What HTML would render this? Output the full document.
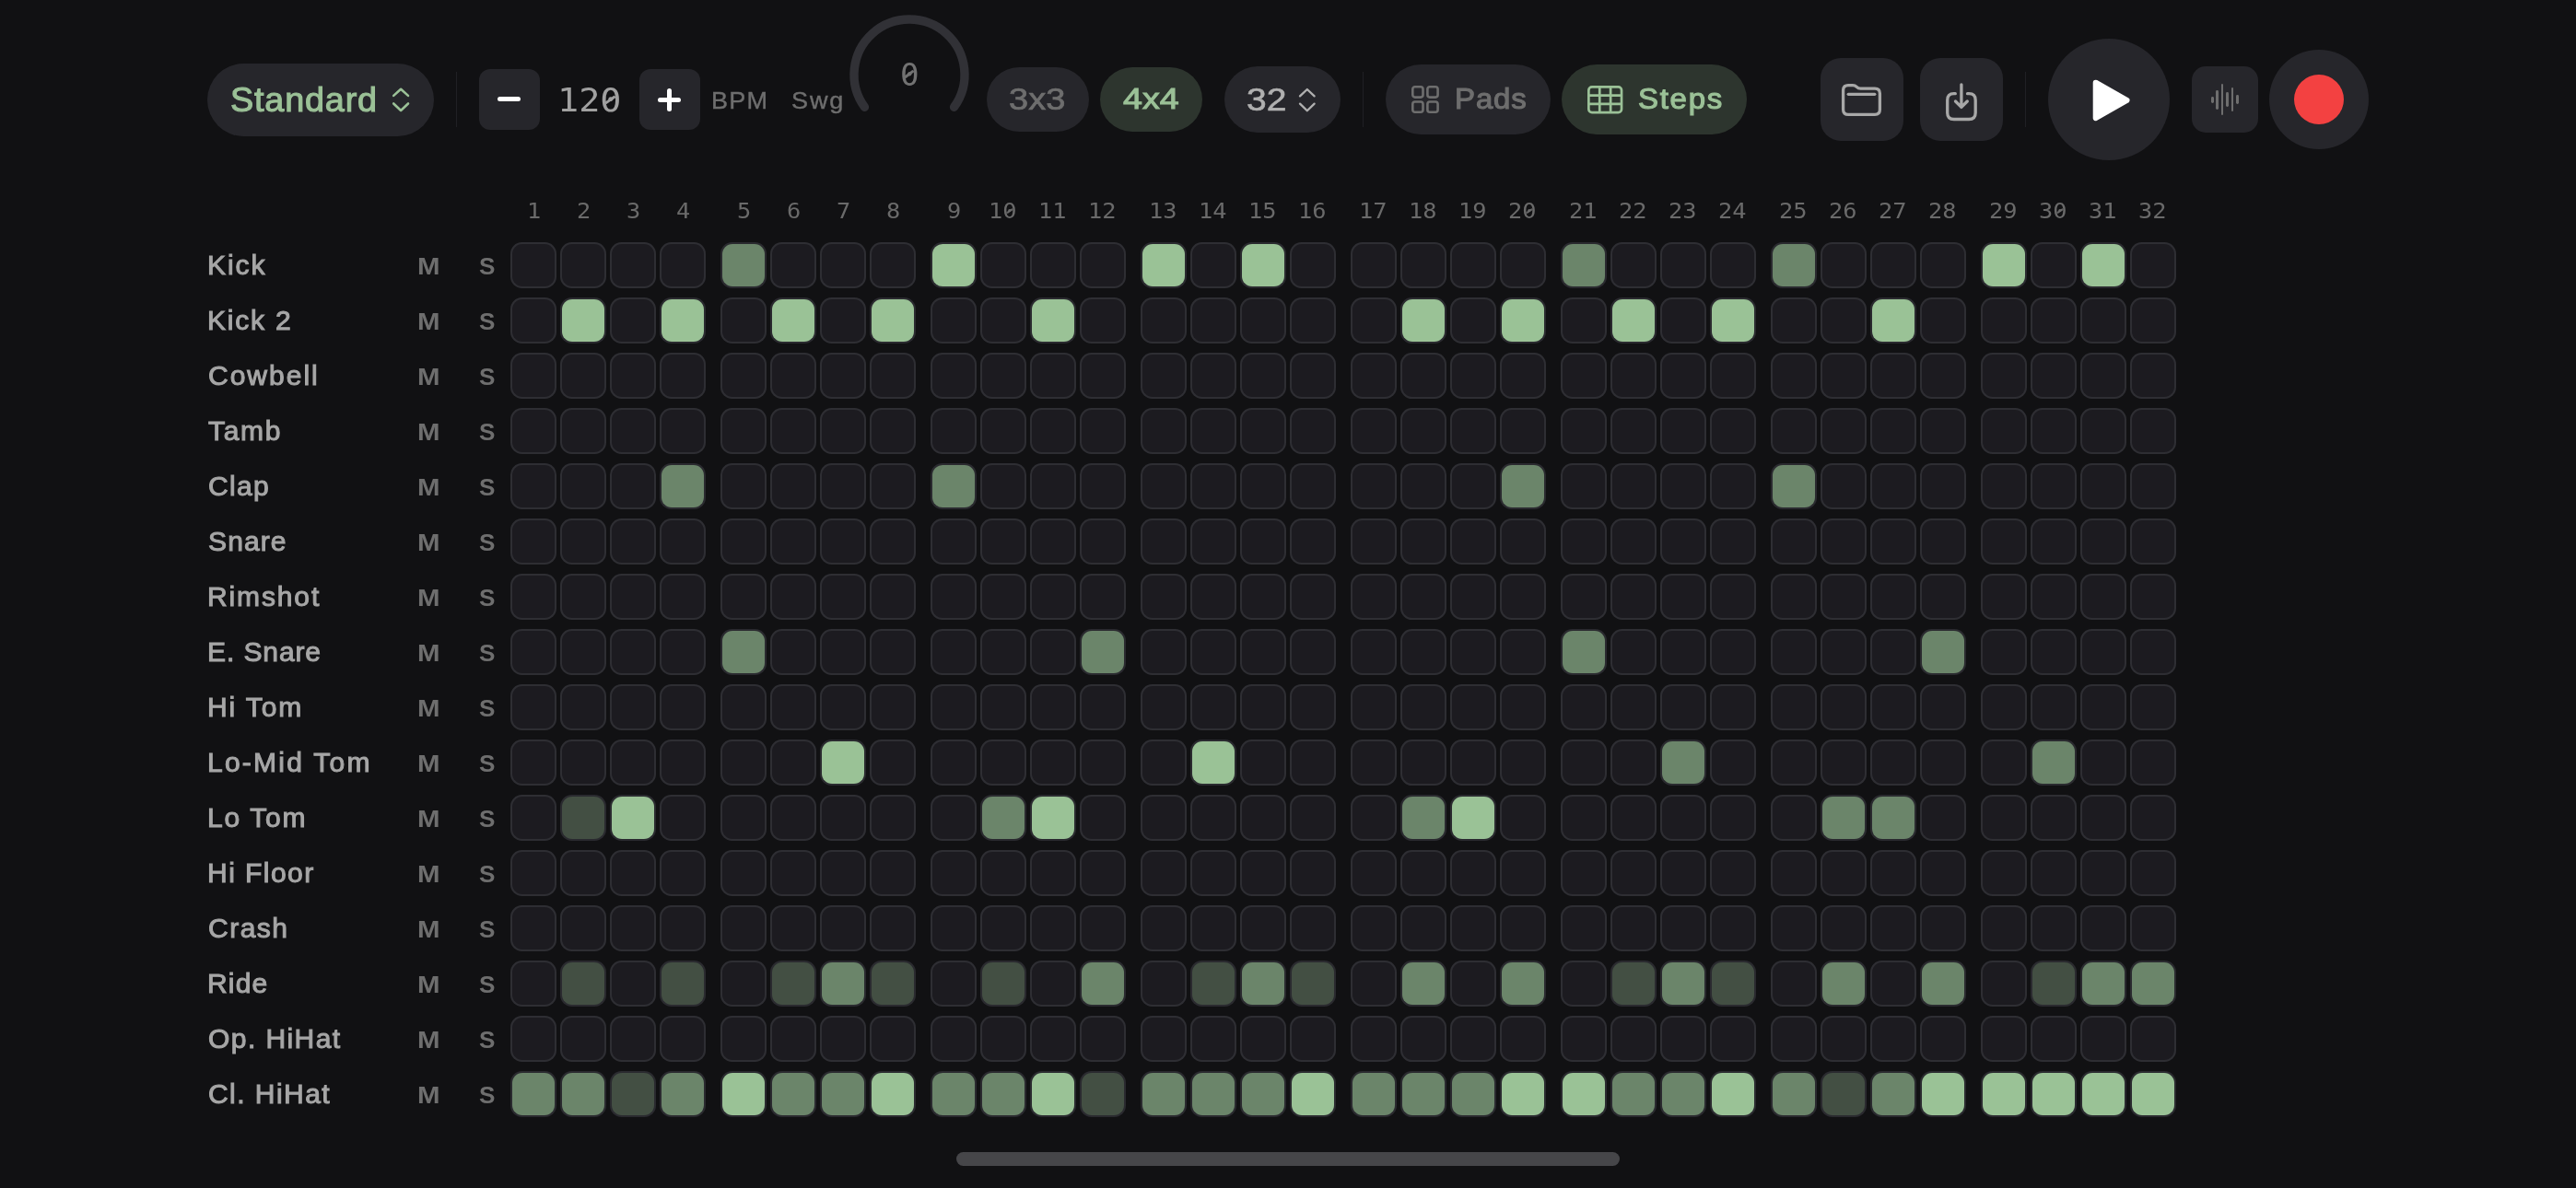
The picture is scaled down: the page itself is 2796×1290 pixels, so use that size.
<!DOCTYPE html>
<html lang="en"><head><meta charset="utf-8"><title>Step Sequencer</title>
<style>
html,body{margin:0;padding:0}
body{width:2796px;height:1290px;background:#111113;position:relative;overflow:hidden;font-family:"Liberation Sans",sans-serif}
.t{will-change:transform;position:absolute;white-space:pre;transform-origin:0 0;display:block}
.sans{font-family:"Liberation Sans",sans-serif}
.mono{font-family:"DejaVu Sans Mono","Liberation Mono",monospace}
.b{position:absolute;box-sizing:border-box}
.sl{position:absolute;display:block;border-radius:1px}
.pill{background:#26262b}
.c{position:absolute;width:49.5px;height:49.5px;border-radius:12.5px;background:#2e2e33}
.c::before{content:"";position:absolute;left:1.4px;top:1.4px;right:1.4px;bottom:1.4px;border-radius:11.1px;background:#1c1b20}
.c.v1,.c.v2,.c.v3{background:#2a2a2f}
.c.v3::before{background:#9ac296}
.c.v2::before{background:#6b856a}
.c.v1::before{background:#434f43}
svg{position:absolute;overflow:visible}
</style></head><body>

<header class="toolbar">
<div class="b pill" style="left:225px;top:68.8px;width:246px;height:79px;border-radius:39.5px"></div>
<span class="t sans " style="left:249.70px;top:90.94px;font-weight:400;font-size:36.00px;line-height:36.00px;color:#9bc197;letter-spacing:0.77px;transform:scale(1.0500,1.0000);-webkit-text-stroke:1.05px #9bc197;">Standard</span>
<svg style="left:425px;top:95px" width="20" height="27" viewBox="0 0 20 27"><path d="M2.2 8.9 L10.1 1.8 L18 8.9 M2.2 17.5 L10.1 25 L18 17.5" fill="none" stroke="#9bc197" stroke-width="2.6" stroke-linecap="round" stroke-linejoin="round"/></svg>
<div class="b" style="left:495px;top:78px;width:1px;height:60px;background:#202024"></div>
<div class="b pill" style="left:520px;top:75px;width:66px;height:66px;border-radius:12px"></div>
<div class="b" style="left:539.8px;top:105.1px;width:25.4px;height:5.1px;border-radius:2.55px;background:#fff"></div>
<span class="t mono " style="left:604.69px;top:92.00px;font-weight:400;font-size:34.80px;line-height:34.80px;color:#a0a0a0;transform:scale(1.1050,1.0000);">120</span>
<i class="sl" style="left:656.22px;top:107.10px;width:12.70px;height:3.41px;background:#a0a0a0;transform:rotate(-35.1deg)"></i>
<div class="b pill" style="left:694px;top:75px;width:66px;height:66px;border-radius:12px"></div>
<div class="b" style="left:713.8px;top:105.85px;width:25.4px;height:5.1px;border-radius:2.55px;background:#fff"></div>
<div class="b" style="left:724.05px;top:95.6px;width:5.1px;height:25.6px;border-radius:2.55px;background:#fff"></div>
<span class="t sans " style="left:771.97px;top:96.00px;font-weight:400;font-size:26.00px;line-height:26.00px;color:#6e6e6e;letter-spacing:1.18px;transform:scale(1.0400,1.0000);-webkit-text-stroke:0.4px #6e6e6e;">BPM</span>
<span class="t sans " style="left:858.88px;top:96.00px;font-weight:400;font-size:26.00px;line-height:26.00px;color:#6e6e6e;letter-spacing:1.79px;transform:scale(1.0400,1.0000);-webkit-text-stroke:0.4px #6e6e6e;">Swg</span>
<svg style="left:0;top:0" width="2796" height="200"><path d="M938.46 116.27 A60 60 0 1 1 1035.54 116.27" fill="none" stroke="#313136" stroke-width="9.4" stroke-linecap="round"/></svg>
<span class="t mono " style="left:976.88px;top:64.50px;font-weight:400;font-size:33.60px;line-height:33.60px;color:#727272;transform:scale(1.0200,1.0000);">0</span>
<i class="sl" style="left:981.37px;top:78.99px;width:11.64px;height:3.29px;background:#727272;transform:rotate(-37.3deg)"></i>
<div class="b pill" style="left:1071px;top:73px;width:111px;height:70px;border-radius:35px"></div>
<span class="t sans " style="left:1095.48px;top:91.24px;font-weight:400;font-size:33.20px;line-height:33.20px;color:#6e6e6e;transform:scale(1.1477,1.0000);-webkit-text-stroke:0.7px #6e6e6e;">3x3</span>
<div class="b" style="left:1194px;top:73px;width:111px;height:70px;border-radius:35px;background:#2d352e"></div>
<span class="t sans " style="left:1219.21px;top:92.20px;font-weight:400;font-size:31.00px;line-height:31.00px;color:#9bc197;transform:scale(1.2117,1.0000);-webkit-text-stroke:1.0px #9bc197;">4x4</span>
<div class="b pill" style="left:1329px;top:72px;width:126px;height:72px;border-radius:36px"></div>
<span class="t sans " style="left:1353.22px;top:91.15px;font-weight:400;font-size:34.50px;line-height:34.50px;color:#b0b0b0;transform:scale(1.1311,1.0000);-webkit-text-stroke:0.6px #b0b0b0;">32</span>
<svg style="left:1409px;top:95px" width="20" height="28" viewBox="0 0 20 28"><path d="M2 9.4 L9.8 2 L17.6 9.4 M2 17.6 L9.8 25.2 L17.6 17.6" fill="none" stroke="#b0b0b0" stroke-width="2.3" stroke-linecap="round" stroke-linejoin="round"/></svg>
<div class="b" style="left:1479px;top:78px;width:1px;height:60px;background:#202024"></div>
<div class="b pill" style="left:1504px;top:70px;width:179px;height:76px;border-radius:38px"></div>
<svg style="left:1531.9px;top:93.1px" width="30" height="30.2" viewBox="0 0 30 30.2"><g fill="none" stroke="#6e6e6e" stroke-width="2.6"><rect x="1.3" y="1.3" width="11.2" height="11.3" rx="2.5"/><rect x="17.4" y="1.3" width="11.2" height="11.3" rx="2.5"/><rect x="1.3" y="17.5" width="11.2" height="11.3" rx="2.5"/><rect x="17.4" y="17.5" width="11.2" height="11.3" rx="2.5"/></g></svg>
<span class="t sans " style="left:1579.40px;top:92.82px;font-weight:400;font-size:30.80px;line-height:30.80px;color:#6e6e6e;letter-spacing:0.85px;transform:scale(1.0700,1.0000);-webkit-text-stroke:1.1px #6e6e6e;">Pads</span>
<div class="b" style="left:1695px;top:70px;width:201px;height:76px;border-radius:38px;background:#2d352e"></div>
<svg style="left:1722.8px;top:92.8px" width="38.4" height="30.4" viewBox="0 0 38.4 30.4"><g fill="none" stroke="#9bc197" stroke-width="2.7"><rect x="1.35" y="1.35" width="35.7" height="27.7" rx="3.6"/><path d="M13.25 1.35V29.05M25.15 1.35V29.05M1.35 10.6H37.05M1.35 19.8H37.05"/></g></svg>
<span class="t sans " style="left:1778.24px;top:93.14px;font-weight:400;font-size:30.80px;line-height:30.80px;color:#9bc197;letter-spacing:1.62px;transform:scale(1.0700,1.0000);-webkit-text-stroke:1.1px #9bc197;">Steps</span>
<div class="b pill" style="left:1976px;top:63px;width:90px;height:90px;border-radius:22px"></div>
<svg style="left:1998px;top:89px" width="46" height="40" viewBox="0 0 46 40"><g fill="none" stroke="#a8a8a8" stroke-width="3.3" stroke-linecap="round" stroke-linejoin="round"><path d="M2.6 9 Q2.6 3.6 8 3.6 H13 Q15.5 3.6 17.2 5.3 Q19 7.1 21.5 7.1 H37 Q42.4 7.1 42.4 12.5 V30 Q42.4 35.4 37 35.4 H8 Q2.6 35.4 2.6 30 Z"/><path d="M8.2 13.3 H36.8"/></g></svg>
<div class="b pill" style="left:2084px;top:63px;width:90px;height:90px;border-radius:22px"></div>
<svg style="left:2110px;top:88px" width="38" height="46" viewBox="0 0 38 46"><g fill="none" stroke="#a8a8a8" stroke-width="3.3" stroke-linecap="round" stroke-linejoin="round"><path d="M12.3 13.7 H10.8 Q3.7 13.7 3.7 20.8 V34.4 Q3.7 41.5 10.8 41.5 H27.1 Q34.2 41.5 34.2 34.4 V20.8 Q34.2 13.7 27.1 13.7 H25.5"/><path d="M18.9 3.85 V28.4 M12.5 22 L18.9 28.4 L25.3 22"/></g></svg>
<div class="b" style="left:2198px;top:78px;width:1px;height:60px;background:#202024"></div>
<div class="b pill" style="left:2223px;top:42px;width:132px;height:132px;border-radius:66px"></div>
<svg style="left:2268px;top:84px" width="48" height="50" viewBox="0 0 48 50"><path d="M6.7 5.7 L40.5 24.9 L6.7 44.2 Z" fill="#fff" stroke="#fff" stroke-width="6" stroke-linejoin="round"/></svg>
<div class="b pill" style="left:2379px;top:72px;width:72px;height:72px;border-radius:15px"></div>
<div class="b" style="left:2400.00px;top:104.50px;width:2.8px;height:7.30px;border-radius:1.4px;background:#6e6e6e"></div>
<div class="b" style="left:2405.10px;top:98.00px;width:2.8px;height:20.50px;border-radius:1.4px;background:#6e6e6e"></div>
<div class="b" style="left:2410.70px;top:91.30px;width:2.8px;height:33.40px;border-radius:1.4px;background:#6e6e6e"></div>
<div class="b" style="left:2416.10px;top:99.90px;width:2.8px;height:16.30px;border-radius:1.4px;background:#6e6e6e"></div>
<div class="b" style="left:2421.60px;top:94.90px;width:2.8px;height:26.40px;border-radius:1.4px;background:#6e6e6e"></div>
<div class="b" style="left:2427.00px;top:103.00px;width:2.8px;height:10.10px;border-radius:1.4px;background:#6e6e6e"></div>
<div class="b pill" style="left:2463px;top:54px;width:108px;height:108px;border-radius:54px"></div>
<div class="b" style="left:2490px;top:81px;width:54px;height:54px;border-radius:27px;background:#f34141"></div>
</header>
<main class="grid">
<div class="steps-header">
<span class="t mono " style="left:571.73px;top:218.10px;font-weight:400;font-size:22.60px;line-height:22.60px;color:#6a6a6a;transform:scale(1.1200,1.0000);">1</span>
<span class="t mono " style="left:625.73px;top:218.10px;font-weight:400;font-size:22.60px;line-height:22.60px;color:#6a6a6a;transform:scale(1.1200,1.0000);">2</span>
<span class="t mono " style="left:679.73px;top:218.10px;font-weight:400;font-size:22.60px;line-height:22.60px;color:#6a6a6a;transform:scale(1.1200,1.0000);">3</span>
<span class="t mono " style="left:733.73px;top:218.10px;font-weight:400;font-size:22.60px;line-height:22.60px;color:#6a6a6a;transform:scale(1.1200,1.0000);">4</span>
<span class="t mono " style="left:799.73px;top:218.10px;font-weight:400;font-size:22.60px;line-height:22.60px;color:#6a6a6a;transform:scale(1.1200,1.0000);">5</span>
<span class="t mono " style="left:853.73px;top:218.10px;font-weight:400;font-size:22.60px;line-height:22.60px;color:#6a6a6a;transform:scale(1.1200,1.0000);">6</span>
<span class="t mono " style="left:907.73px;top:218.10px;font-weight:400;font-size:22.60px;line-height:22.60px;color:#6a6a6a;transform:scale(1.1200,1.0000);">7</span>
<span class="t mono " style="left:961.73px;top:218.10px;font-weight:400;font-size:22.60px;line-height:22.60px;color:#6a6a6a;transform:scale(1.1200,1.0000);">8</span>
<span class="t mono " style="left:1027.73px;top:218.10px;font-weight:400;font-size:22.60px;line-height:22.60px;color:#6a6a6a;transform:scale(1.1200,1.0000);">9</span>
<span class="t mono " style="left:1073.06px;top:218.10px;font-weight:400;font-size:22.60px;line-height:22.60px;color:#6a6a6a;transform:scale(1.1200,1.0000);">10</span>
<i class="sl" style="left:1091.76px;top:228.11px;width:8.32px;height:2.21px;background:#6a6a6a;transform:rotate(-34.8deg)"></i>
<span class="t mono " style="left:1127.06px;top:218.10px;font-weight:400;font-size:22.60px;line-height:22.60px;color:#6a6a6a;transform:scale(1.1200,1.0000);">11</span>
<span class="t mono " style="left:1181.06px;top:218.10px;font-weight:400;font-size:22.60px;line-height:22.60px;color:#6a6a6a;transform:scale(1.1200,1.0000);">12</span>
<span class="t mono " style="left:1247.06px;top:218.10px;font-weight:400;font-size:22.60px;line-height:22.60px;color:#6a6a6a;transform:scale(1.1200,1.0000);">13</span>
<span class="t mono " style="left:1301.06px;top:218.10px;font-weight:400;font-size:22.60px;line-height:22.60px;color:#6a6a6a;transform:scale(1.1200,1.0000);">14</span>
<span class="t mono " style="left:1355.06px;top:218.10px;font-weight:400;font-size:22.60px;line-height:22.60px;color:#6a6a6a;transform:scale(1.1200,1.0000);">15</span>
<span class="t mono " style="left:1409.06px;top:218.10px;font-weight:400;font-size:22.60px;line-height:22.60px;color:#6a6a6a;transform:scale(1.1200,1.0000);">16</span>
<span class="t mono " style="left:1475.06px;top:218.10px;font-weight:400;font-size:22.60px;line-height:22.60px;color:#6a6a6a;transform:scale(1.1200,1.0000);">17</span>
<span class="t mono " style="left:1529.06px;top:218.10px;font-weight:400;font-size:22.60px;line-height:22.60px;color:#6a6a6a;transform:scale(1.1200,1.0000);">18</span>
<span class="t mono " style="left:1583.06px;top:218.10px;font-weight:400;font-size:22.60px;line-height:22.60px;color:#6a6a6a;transform:scale(1.1200,1.0000);">19</span>
<span class="t mono " style="left:1637.06px;top:218.10px;font-weight:400;font-size:22.60px;line-height:22.60px;color:#6a6a6a;transform:scale(1.1200,1.0000);">20</span>
<i class="sl" style="left:1655.76px;top:228.11px;width:8.32px;height:2.21px;background:#6a6a6a;transform:rotate(-34.8deg)"></i>
<span class="t mono " style="left:1703.06px;top:218.10px;font-weight:400;font-size:22.60px;line-height:22.60px;color:#6a6a6a;transform:scale(1.1200,1.0000);">21</span>
<span class="t mono " style="left:1757.06px;top:218.10px;font-weight:400;font-size:22.60px;line-height:22.60px;color:#6a6a6a;transform:scale(1.1200,1.0000);">22</span>
<span class="t mono " style="left:1811.06px;top:218.10px;font-weight:400;font-size:22.60px;line-height:22.60px;color:#6a6a6a;transform:scale(1.1200,1.0000);">23</span>
<span class="t mono " style="left:1865.06px;top:218.10px;font-weight:400;font-size:22.60px;line-height:22.60px;color:#6a6a6a;transform:scale(1.1200,1.0000);">24</span>
<span class="t mono " style="left:1931.06px;top:218.10px;font-weight:400;font-size:22.60px;line-height:22.60px;color:#6a6a6a;transform:scale(1.1200,1.0000);">25</span>
<span class="t mono " style="left:1985.06px;top:218.10px;font-weight:400;font-size:22.60px;line-height:22.60px;color:#6a6a6a;transform:scale(1.1200,1.0000);">26</span>
<span class="t mono " style="left:2039.06px;top:218.10px;font-weight:400;font-size:22.60px;line-height:22.60px;color:#6a6a6a;transform:scale(1.1200,1.0000);">27</span>
<span class="t mono " style="left:2093.06px;top:218.10px;font-weight:400;font-size:22.60px;line-height:22.60px;color:#6a6a6a;transform:scale(1.1200,1.0000);">28</span>
<span class="t mono " style="left:2159.06px;top:218.10px;font-weight:400;font-size:22.60px;line-height:22.60px;color:#6a6a6a;transform:scale(1.1200,1.0000);">29</span>
<span class="t mono " style="left:2213.06px;top:218.10px;font-weight:400;font-size:22.60px;line-height:22.60px;color:#6a6a6a;transform:scale(1.1200,1.0000);">30</span>
<i class="sl" style="left:2231.76px;top:228.11px;width:8.32px;height:2.21px;background:#6a6a6a;transform:rotate(-34.8deg)"></i>
<span class="t mono " style="left:2267.06px;top:218.10px;font-weight:400;font-size:22.60px;line-height:22.60px;color:#6a6a6a;transform:scale(1.1200,1.0000);">31</span>
<span class="t mono " style="left:2321.06px;top:218.10px;font-weight:400;font-size:22.60px;line-height:22.60px;color:#6a6a6a;transform:scale(1.1200,1.0000);">32</span>
</div>
<div class="row">
<span class="t sans " style="left:224.52px;top:274.42px;font-weight:400;font-size:28.60px;line-height:28.60px;color:#a6a6a6;letter-spacing:1.82px;transform:scale(1.0500,1.0000);-webkit-text-stroke:1.0px #a6a6a6;">Kick</span>
<span class="t sans " style="left:452.61px;top:275.60px;font-weight:700;font-size:26.00px;line-height:26.00px;color:#6e6e6e;transform:scale(1.1319,1.0000);">M</span>
<span class="t sans " style="left:519.62px;top:275.60px;font-weight:700;font-size:26.00px;line-height:26.00px;color:#6e6e6e;transform:scale(1.0042,1.0000);">S</span>
<div class="c" style="left:554.25px;top:263.25px"></div>
<div class="c" style="left:608.25px;top:263.25px"></div>
<div class="c" style="left:662.25px;top:263.25px"></div>
<div class="c" style="left:716.25px;top:263.25px"></div>
<div class="c v2" style="left:782.25px;top:263.25px"></div>
<div class="c" style="left:836.25px;top:263.25px"></div>
<div class="c" style="left:890.25px;top:263.25px"></div>
<div class="c" style="left:944.25px;top:263.25px"></div>
<div class="c v3" style="left:1010.25px;top:263.25px"></div>
<div class="c" style="left:1064.25px;top:263.25px"></div>
<div class="c" style="left:1118.25px;top:263.25px"></div>
<div class="c" style="left:1172.25px;top:263.25px"></div>
<div class="c v3" style="left:1238.25px;top:263.25px"></div>
<div class="c" style="left:1292.25px;top:263.25px"></div>
<div class="c v3" style="left:1346.25px;top:263.25px"></div>
<div class="c" style="left:1400.25px;top:263.25px"></div>
<div class="c" style="left:1466.25px;top:263.25px"></div>
<div class="c" style="left:1520.25px;top:263.25px"></div>
<div class="c" style="left:1574.25px;top:263.25px"></div>
<div class="c" style="left:1628.25px;top:263.25px"></div>
<div class="c v2" style="left:1694.25px;top:263.25px"></div>
<div class="c" style="left:1748.25px;top:263.25px"></div>
<div class="c" style="left:1802.25px;top:263.25px"></div>
<div class="c" style="left:1856.25px;top:263.25px"></div>
<div class="c v2" style="left:1922.25px;top:263.25px"></div>
<div class="c" style="left:1976.25px;top:263.25px"></div>
<div class="c" style="left:2030.25px;top:263.25px"></div>
<div class="c" style="left:2084.25px;top:263.25px"></div>
<div class="c v3" style="left:2150.25px;top:263.25px"></div>
<div class="c" style="left:2204.25px;top:263.25px"></div>
<div class="c v3" style="left:2258.25px;top:263.25px"></div>
<div class="c" style="left:2312.25px;top:263.25px"></div>
</div>
<div class="row">
<span class="t sans " style="left:224.52px;top:334.42px;font-weight:400;font-size:28.60px;line-height:28.60px;color:#a6a6a6;letter-spacing:1.70px;transform:scale(1.0500,1.0000);-webkit-text-stroke:1.0px #a6a6a6;">Kick 2</span>
<span class="t sans " style="left:452.61px;top:335.60px;font-weight:700;font-size:26.00px;line-height:26.00px;color:#6e6e6e;transform:scale(1.1319,1.0000);">M</span>
<span class="t sans " style="left:519.62px;top:335.60px;font-weight:700;font-size:26.00px;line-height:26.00px;color:#6e6e6e;transform:scale(1.0042,1.0000);">S</span>
<div class="c" style="left:554.25px;top:323.25px"></div>
<div class="c v3" style="left:608.25px;top:323.25px"></div>
<div class="c" style="left:662.25px;top:323.25px"></div>
<div class="c v3" style="left:716.25px;top:323.25px"></div>
<div class="c" style="left:782.25px;top:323.25px"></div>
<div class="c v3" style="left:836.25px;top:323.25px"></div>
<div class="c" style="left:890.25px;top:323.25px"></div>
<div class="c v3" style="left:944.25px;top:323.25px"></div>
<div class="c" style="left:1010.25px;top:323.25px"></div>
<div class="c" style="left:1064.25px;top:323.25px"></div>
<div class="c v3" style="left:1118.25px;top:323.25px"></div>
<div class="c" style="left:1172.25px;top:323.25px"></div>
<div class="c" style="left:1238.25px;top:323.25px"></div>
<div class="c" style="left:1292.25px;top:323.25px"></div>
<div class="c" style="left:1346.25px;top:323.25px"></div>
<div class="c" style="left:1400.25px;top:323.25px"></div>
<div class="c" style="left:1466.25px;top:323.25px"></div>
<div class="c v3" style="left:1520.25px;top:323.25px"></div>
<div class="c" style="left:1574.25px;top:323.25px"></div>
<div class="c v3" style="left:1628.25px;top:323.25px"></div>
<div class="c" style="left:1694.25px;top:323.25px"></div>
<div class="c v3" style="left:1748.25px;top:323.25px"></div>
<div class="c" style="left:1802.25px;top:323.25px"></div>
<div class="c v3" style="left:1856.25px;top:323.25px"></div>
<div class="c" style="left:1922.25px;top:323.25px"></div>
<div class="c" style="left:1976.25px;top:323.25px"></div>
<div class="c v3" style="left:2030.25px;top:323.25px"></div>
<div class="c" style="left:2084.25px;top:323.25px"></div>
<div class="c" style="left:2150.25px;top:323.25px"></div>
<div class="c" style="left:2204.25px;top:323.25px"></div>
<div class="c" style="left:2258.25px;top:323.25px"></div>
<div class="c" style="left:2312.25px;top:323.25px"></div>
</div>
<div class="row">
<span class="t sans " style="left:225.50px;top:394.42px;font-weight:400;font-size:28.60px;line-height:28.60px;color:#a6a6a6;letter-spacing:1.89px;transform:scale(1.0500,1.0000);-webkit-text-stroke:1.0px #a6a6a6;">Cowbell</span>
<span class="t sans " style="left:452.61px;top:395.60px;font-weight:700;font-size:26.00px;line-height:26.00px;color:#6e6e6e;transform:scale(1.1319,1.0000);">M</span>
<span class="t sans " style="left:519.62px;top:395.60px;font-weight:700;font-size:26.00px;line-height:26.00px;color:#6e6e6e;transform:scale(1.0042,1.0000);">S</span>
<div class="c" style="left:554.25px;top:383.25px"></div>
<div class="c" style="left:608.25px;top:383.25px"></div>
<div class="c" style="left:662.25px;top:383.25px"></div>
<div class="c" style="left:716.25px;top:383.25px"></div>
<div class="c" style="left:782.25px;top:383.25px"></div>
<div class="c" style="left:836.25px;top:383.25px"></div>
<div class="c" style="left:890.25px;top:383.25px"></div>
<div class="c" style="left:944.25px;top:383.25px"></div>
<div class="c" style="left:1010.25px;top:383.25px"></div>
<div class="c" style="left:1064.25px;top:383.25px"></div>
<div class="c" style="left:1118.25px;top:383.25px"></div>
<div class="c" style="left:1172.25px;top:383.25px"></div>
<div class="c" style="left:1238.25px;top:383.25px"></div>
<div class="c" style="left:1292.25px;top:383.25px"></div>
<div class="c" style="left:1346.25px;top:383.25px"></div>
<div class="c" style="left:1400.25px;top:383.25px"></div>
<div class="c" style="left:1466.25px;top:383.25px"></div>
<div class="c" style="left:1520.25px;top:383.25px"></div>
<div class="c" style="left:1574.25px;top:383.25px"></div>
<div class="c" style="left:1628.25px;top:383.25px"></div>
<div class="c" style="left:1694.25px;top:383.25px"></div>
<div class="c" style="left:1748.25px;top:383.25px"></div>
<div class="c" style="left:1802.25px;top:383.25px"></div>
<div class="c" style="left:1856.25px;top:383.25px"></div>
<div class="c" style="left:1922.25px;top:383.25px"></div>
<div class="c" style="left:1976.25px;top:383.25px"></div>
<div class="c" style="left:2030.25px;top:383.25px"></div>
<div class="c" style="left:2084.25px;top:383.25px"></div>
<div class="c" style="left:2150.25px;top:383.25px"></div>
<div class="c" style="left:2204.25px;top:383.25px"></div>
<div class="c" style="left:2258.25px;top:383.25px"></div>
<div class="c" style="left:2312.25px;top:383.25px"></div>
</div>
<div class="row">
<span class="t sans " style="left:226.32px;top:454.42px;font-weight:400;font-size:28.60px;line-height:28.60px;color:#a6a6a6;letter-spacing:1.60px;transform:scale(1.0500,1.0000);-webkit-text-stroke:1.0px #a6a6a6;">Tamb</span>
<span class="t sans " style="left:452.61px;top:455.60px;font-weight:700;font-size:26.00px;line-height:26.00px;color:#6e6e6e;transform:scale(1.1319,1.0000);">M</span>
<span class="t sans " style="left:519.62px;top:455.60px;font-weight:700;font-size:26.00px;line-height:26.00px;color:#6e6e6e;transform:scale(1.0042,1.0000);">S</span>
<div class="c" style="left:554.25px;top:443.25px"></div>
<div class="c" style="left:608.25px;top:443.25px"></div>
<div class="c" style="left:662.25px;top:443.25px"></div>
<div class="c" style="left:716.25px;top:443.25px"></div>
<div class="c" style="left:782.25px;top:443.25px"></div>
<div class="c" style="left:836.25px;top:443.25px"></div>
<div class="c" style="left:890.25px;top:443.25px"></div>
<div class="c" style="left:944.25px;top:443.25px"></div>
<div class="c" style="left:1010.25px;top:443.25px"></div>
<div class="c" style="left:1064.25px;top:443.25px"></div>
<div class="c" style="left:1118.25px;top:443.25px"></div>
<div class="c" style="left:1172.25px;top:443.25px"></div>
<div class="c" style="left:1238.25px;top:443.25px"></div>
<div class="c" style="left:1292.25px;top:443.25px"></div>
<div class="c" style="left:1346.25px;top:443.25px"></div>
<div class="c" style="left:1400.25px;top:443.25px"></div>
<div class="c" style="left:1466.25px;top:443.25px"></div>
<div class="c" style="left:1520.25px;top:443.25px"></div>
<div class="c" style="left:1574.25px;top:443.25px"></div>
<div class="c" style="left:1628.25px;top:443.25px"></div>
<div class="c" style="left:1694.25px;top:443.25px"></div>
<div class="c" style="left:1748.25px;top:443.25px"></div>
<div class="c" style="left:1802.25px;top:443.25px"></div>
<div class="c" style="left:1856.25px;top:443.25px"></div>
<div class="c" style="left:1922.25px;top:443.25px"></div>
<div class="c" style="left:1976.25px;top:443.25px"></div>
<div class="c" style="left:2030.25px;top:443.25px"></div>
<div class="c" style="left:2084.25px;top:443.25px"></div>
<div class="c" style="left:2150.25px;top:443.25px"></div>
<div class="c" style="left:2204.25px;top:443.25px"></div>
<div class="c" style="left:2258.25px;top:443.25px"></div>
<div class="c" style="left:2312.25px;top:443.25px"></div>
</div>
<div class="row">
<span class="t sans " style="left:225.50px;top:514.42px;font-weight:400;font-size:28.60px;line-height:28.60px;color:#a6a6a6;letter-spacing:1.27px;transform:scale(1.0500,1.0000);-webkit-text-stroke:1.0px #a6a6a6;">Clap</span>
<span class="t sans " style="left:452.61px;top:515.60px;font-weight:700;font-size:26.00px;line-height:26.00px;color:#6e6e6e;transform:scale(1.1319,1.0000);">M</span>
<span class="t sans " style="left:519.62px;top:515.60px;font-weight:700;font-size:26.00px;line-height:26.00px;color:#6e6e6e;transform:scale(1.0042,1.0000);">S</span>
<div class="c" style="left:554.25px;top:503.25px"></div>
<div class="c" style="left:608.25px;top:503.25px"></div>
<div class="c" style="left:662.25px;top:503.25px"></div>
<div class="c v2" style="left:716.25px;top:503.25px"></div>
<div class="c" style="left:782.25px;top:503.25px"></div>
<div class="c" style="left:836.25px;top:503.25px"></div>
<div class="c" style="left:890.25px;top:503.25px"></div>
<div class="c" style="left:944.25px;top:503.25px"></div>
<div class="c v2" style="left:1010.25px;top:503.25px"></div>
<div class="c" style="left:1064.25px;top:503.25px"></div>
<div class="c" style="left:1118.25px;top:503.25px"></div>
<div class="c" style="left:1172.25px;top:503.25px"></div>
<div class="c" style="left:1238.25px;top:503.25px"></div>
<div class="c" style="left:1292.25px;top:503.25px"></div>
<div class="c" style="left:1346.25px;top:503.25px"></div>
<div class="c" style="left:1400.25px;top:503.25px"></div>
<div class="c" style="left:1466.25px;top:503.25px"></div>
<div class="c" style="left:1520.25px;top:503.25px"></div>
<div class="c" style="left:1574.25px;top:503.25px"></div>
<div class="c v2" style="left:1628.25px;top:503.25px"></div>
<div class="c" style="left:1694.25px;top:503.25px"></div>
<div class="c" style="left:1748.25px;top:503.25px"></div>
<div class="c" style="left:1802.25px;top:503.25px"></div>
<div class="c" style="left:1856.25px;top:503.25px"></div>
<div class="c v2" style="left:1922.25px;top:503.25px"></div>
<div class="c" style="left:1976.25px;top:503.25px"></div>
<div class="c" style="left:2030.25px;top:503.25px"></div>
<div class="c" style="left:2084.25px;top:503.25px"></div>
<div class="c" style="left:2150.25px;top:503.25px"></div>
<div class="c" style="left:2204.25px;top:503.25px"></div>
<div class="c" style="left:2258.25px;top:503.25px"></div>
<div class="c" style="left:2312.25px;top:503.25px"></div>
</div>
<div class="row">
<span class="t sans " style="left:225.65px;top:574.42px;font-weight:400;font-size:28.60px;line-height:28.60px;color:#a6a6a6;letter-spacing:1.05px;transform:scale(1.0500,1.0000);-webkit-text-stroke:1.0px #a6a6a6;">Snare</span>
<span class="t sans " style="left:452.61px;top:575.60px;font-weight:700;font-size:26.00px;line-height:26.00px;color:#6e6e6e;transform:scale(1.1319,1.0000);">M</span>
<span class="t sans " style="left:519.62px;top:575.60px;font-weight:700;font-size:26.00px;line-height:26.00px;color:#6e6e6e;transform:scale(1.0042,1.0000);">S</span>
<div class="c" style="left:554.25px;top:563.25px"></div>
<div class="c" style="left:608.25px;top:563.25px"></div>
<div class="c" style="left:662.25px;top:563.25px"></div>
<div class="c" style="left:716.25px;top:563.25px"></div>
<div class="c" style="left:782.25px;top:563.25px"></div>
<div class="c" style="left:836.25px;top:563.25px"></div>
<div class="c" style="left:890.25px;top:563.25px"></div>
<div class="c" style="left:944.25px;top:563.25px"></div>
<div class="c" style="left:1010.25px;top:563.25px"></div>
<div class="c" style="left:1064.25px;top:563.25px"></div>
<div class="c" style="left:1118.25px;top:563.25px"></div>
<div class="c" style="left:1172.25px;top:563.25px"></div>
<div class="c" style="left:1238.25px;top:563.25px"></div>
<div class="c" style="left:1292.25px;top:563.25px"></div>
<div class="c" style="left:1346.25px;top:563.25px"></div>
<div class="c" style="left:1400.25px;top:563.25px"></div>
<div class="c" style="left:1466.25px;top:563.25px"></div>
<div class="c" style="left:1520.25px;top:563.25px"></div>
<div class="c" style="left:1574.25px;top:563.25px"></div>
<div class="c" style="left:1628.25px;top:563.25px"></div>
<div class="c" style="left:1694.25px;top:563.25px"></div>
<div class="c" style="left:1748.25px;top:563.25px"></div>
<div class="c" style="left:1802.25px;top:563.25px"></div>
<div class="c" style="left:1856.25px;top:563.25px"></div>
<div class="c" style="left:1922.25px;top:563.25px"></div>
<div class="c" style="left:1976.25px;top:563.25px"></div>
<div class="c" style="left:2030.25px;top:563.25px"></div>
<div class="c" style="left:2084.25px;top:563.25px"></div>
<div class="c" style="left:2150.25px;top:563.25px"></div>
<div class="c" style="left:2204.25px;top:563.25px"></div>
<div class="c" style="left:2258.25px;top:563.25px"></div>
<div class="c" style="left:2312.25px;top:563.25px"></div>
</div>
<div class="row">
<span class="t sans " style="left:224.52px;top:634.42px;font-weight:400;font-size:28.60px;line-height:28.60px;color:#a6a6a6;letter-spacing:1.77px;transform:scale(1.0500,1.0000);-webkit-text-stroke:1.0px #a6a6a6;">Rimshot</span>
<span class="t sans " style="left:452.61px;top:635.60px;font-weight:700;font-size:26.00px;line-height:26.00px;color:#6e6e6e;transform:scale(1.1319,1.0000);">M</span>
<span class="t sans " style="left:519.62px;top:635.60px;font-weight:700;font-size:26.00px;line-height:26.00px;color:#6e6e6e;transform:scale(1.0042,1.0000);">S</span>
<div class="c" style="left:554.25px;top:623.25px"></div>
<div class="c" style="left:608.25px;top:623.25px"></div>
<div class="c" style="left:662.25px;top:623.25px"></div>
<div class="c" style="left:716.25px;top:623.25px"></div>
<div class="c" style="left:782.25px;top:623.25px"></div>
<div class="c" style="left:836.25px;top:623.25px"></div>
<div class="c" style="left:890.25px;top:623.25px"></div>
<div class="c" style="left:944.25px;top:623.25px"></div>
<div class="c" style="left:1010.25px;top:623.25px"></div>
<div class="c" style="left:1064.25px;top:623.25px"></div>
<div class="c" style="left:1118.25px;top:623.25px"></div>
<div class="c" style="left:1172.25px;top:623.25px"></div>
<div class="c" style="left:1238.25px;top:623.25px"></div>
<div class="c" style="left:1292.25px;top:623.25px"></div>
<div class="c" style="left:1346.25px;top:623.25px"></div>
<div class="c" style="left:1400.25px;top:623.25px"></div>
<div class="c" style="left:1466.25px;top:623.25px"></div>
<div class="c" style="left:1520.25px;top:623.25px"></div>
<div class="c" style="left:1574.25px;top:623.25px"></div>
<div class="c" style="left:1628.25px;top:623.25px"></div>
<div class="c" style="left:1694.25px;top:623.25px"></div>
<div class="c" style="left:1748.25px;top:623.25px"></div>
<div class="c" style="left:1802.25px;top:623.25px"></div>
<div class="c" style="left:1856.25px;top:623.25px"></div>
<div class="c" style="left:1922.25px;top:623.25px"></div>
<div class="c" style="left:1976.25px;top:623.25px"></div>
<div class="c" style="left:2030.25px;top:623.25px"></div>
<div class="c" style="left:2084.25px;top:623.25px"></div>
<div class="c" style="left:2150.25px;top:623.25px"></div>
<div class="c" style="left:2204.25px;top:623.25px"></div>
<div class="c" style="left:2258.25px;top:623.25px"></div>
<div class="c" style="left:2312.25px;top:623.25px"></div>
</div>
<div class="row">
<span class="t sans " style="left:224.52px;top:694.42px;font-weight:400;font-size:28.60px;line-height:28.60px;color:#a6a6a6;letter-spacing:0.85px;transform:scale(1.0500,1.0000);-webkit-text-stroke:1.0px #a6a6a6;">E. Snare</span>
<span class="t sans " style="left:452.61px;top:695.60px;font-weight:700;font-size:26.00px;line-height:26.00px;color:#6e6e6e;transform:scale(1.1319,1.0000);">M</span>
<span class="t sans " style="left:519.62px;top:695.60px;font-weight:700;font-size:26.00px;line-height:26.00px;color:#6e6e6e;transform:scale(1.0042,1.0000);">S</span>
<div class="c" style="left:554.25px;top:683.25px"></div>
<div class="c" style="left:608.25px;top:683.25px"></div>
<div class="c" style="left:662.25px;top:683.25px"></div>
<div class="c" style="left:716.25px;top:683.25px"></div>
<div class="c v2" style="left:782.25px;top:683.25px"></div>
<div class="c" style="left:836.25px;top:683.25px"></div>
<div class="c" style="left:890.25px;top:683.25px"></div>
<div class="c" style="left:944.25px;top:683.25px"></div>
<div class="c" style="left:1010.25px;top:683.25px"></div>
<div class="c" style="left:1064.25px;top:683.25px"></div>
<div class="c" style="left:1118.25px;top:683.25px"></div>
<div class="c v2" style="left:1172.25px;top:683.25px"></div>
<div class="c" style="left:1238.25px;top:683.25px"></div>
<div class="c" style="left:1292.25px;top:683.25px"></div>
<div class="c" style="left:1346.25px;top:683.25px"></div>
<div class="c" style="left:1400.25px;top:683.25px"></div>
<div class="c" style="left:1466.25px;top:683.25px"></div>
<div class="c" style="left:1520.25px;top:683.25px"></div>
<div class="c" style="left:1574.25px;top:683.25px"></div>
<div class="c" style="left:1628.25px;top:683.25px"></div>
<div class="c v2" style="left:1694.25px;top:683.25px"></div>
<div class="c" style="left:1748.25px;top:683.25px"></div>
<div class="c" style="left:1802.25px;top:683.25px"></div>
<div class="c" style="left:1856.25px;top:683.25px"></div>
<div class="c" style="left:1922.25px;top:683.25px"></div>
<div class="c" style="left:1976.25px;top:683.25px"></div>
<div class="c" style="left:2030.25px;top:683.25px"></div>
<div class="c v2" style="left:2084.25px;top:683.25px"></div>
<div class="c" style="left:2150.25px;top:683.25px"></div>
<div class="c" style="left:2204.25px;top:683.25px"></div>
<div class="c" style="left:2258.25px;top:683.25px"></div>
<div class="c" style="left:2312.25px;top:683.25px"></div>
</div>
<div class="row">
<span class="t sans " style="left:224.52px;top:754.42px;font-weight:400;font-size:28.60px;line-height:28.60px;color:#a6a6a6;letter-spacing:1.78px;transform:scale(1.0500,1.0000);-webkit-text-stroke:1.0px #a6a6a6;">Hi Tom</span>
<span class="t sans " style="left:452.61px;top:755.60px;font-weight:700;font-size:26.00px;line-height:26.00px;color:#6e6e6e;transform:scale(1.1319,1.0000);">M</span>
<span class="t sans " style="left:519.62px;top:755.60px;font-weight:700;font-size:26.00px;line-height:26.00px;color:#6e6e6e;transform:scale(1.0042,1.0000);">S</span>
<div class="c" style="left:554.25px;top:743.25px"></div>
<div class="c" style="left:608.25px;top:743.25px"></div>
<div class="c" style="left:662.25px;top:743.25px"></div>
<div class="c" style="left:716.25px;top:743.25px"></div>
<div class="c" style="left:782.25px;top:743.25px"></div>
<div class="c" style="left:836.25px;top:743.25px"></div>
<div class="c" style="left:890.25px;top:743.25px"></div>
<div class="c" style="left:944.25px;top:743.25px"></div>
<div class="c" style="left:1010.25px;top:743.25px"></div>
<div class="c" style="left:1064.25px;top:743.25px"></div>
<div class="c" style="left:1118.25px;top:743.25px"></div>
<div class="c" style="left:1172.25px;top:743.25px"></div>
<div class="c" style="left:1238.25px;top:743.25px"></div>
<div class="c" style="left:1292.25px;top:743.25px"></div>
<div class="c" style="left:1346.25px;top:743.25px"></div>
<div class="c" style="left:1400.25px;top:743.25px"></div>
<div class="c" style="left:1466.25px;top:743.25px"></div>
<div class="c" style="left:1520.25px;top:743.25px"></div>
<div class="c" style="left:1574.25px;top:743.25px"></div>
<div class="c" style="left:1628.25px;top:743.25px"></div>
<div class="c" style="left:1694.25px;top:743.25px"></div>
<div class="c" style="left:1748.25px;top:743.25px"></div>
<div class="c" style="left:1802.25px;top:743.25px"></div>
<div class="c" style="left:1856.25px;top:743.25px"></div>
<div class="c" style="left:1922.25px;top:743.25px"></div>
<div class="c" style="left:1976.25px;top:743.25px"></div>
<div class="c" style="left:2030.25px;top:743.25px"></div>
<div class="c" style="left:2084.25px;top:743.25px"></div>
<div class="c" style="left:2150.25px;top:743.25px"></div>
<div class="c" style="left:2204.25px;top:743.25px"></div>
<div class="c" style="left:2258.25px;top:743.25px"></div>
<div class="c" style="left:2312.25px;top:743.25px"></div>
</div>
<div class="row">
<span class="t sans " style="left:224.52px;top:814.42px;font-weight:400;font-size:28.60px;line-height:28.60px;color:#a6a6a6;letter-spacing:2.13px;transform:scale(1.0500,1.0000);-webkit-text-stroke:1.0px #a6a6a6;">Lo-Mid Tom</span>
<span class="t sans " style="left:452.61px;top:815.60px;font-weight:700;font-size:26.00px;line-height:26.00px;color:#6e6e6e;transform:scale(1.1319,1.0000);">M</span>
<span class="t sans " style="left:519.62px;top:815.60px;font-weight:700;font-size:26.00px;line-height:26.00px;color:#6e6e6e;transform:scale(1.0042,1.0000);">S</span>
<div class="c" style="left:554.25px;top:803.25px"></div>
<div class="c" style="left:608.25px;top:803.25px"></div>
<div class="c" style="left:662.25px;top:803.25px"></div>
<div class="c" style="left:716.25px;top:803.25px"></div>
<div class="c" style="left:782.25px;top:803.25px"></div>
<div class="c" style="left:836.25px;top:803.25px"></div>
<div class="c v3" style="left:890.25px;top:803.25px"></div>
<div class="c" style="left:944.25px;top:803.25px"></div>
<div class="c" style="left:1010.25px;top:803.25px"></div>
<div class="c" style="left:1064.25px;top:803.25px"></div>
<div class="c" style="left:1118.25px;top:803.25px"></div>
<div class="c" style="left:1172.25px;top:803.25px"></div>
<div class="c" style="left:1238.25px;top:803.25px"></div>
<div class="c v3" style="left:1292.25px;top:803.25px"></div>
<div class="c" style="left:1346.25px;top:803.25px"></div>
<div class="c" style="left:1400.25px;top:803.25px"></div>
<div class="c" style="left:1466.25px;top:803.25px"></div>
<div class="c" style="left:1520.25px;top:803.25px"></div>
<div class="c" style="left:1574.25px;top:803.25px"></div>
<div class="c" style="left:1628.25px;top:803.25px"></div>
<div class="c" style="left:1694.25px;top:803.25px"></div>
<div class="c" style="left:1748.25px;top:803.25px"></div>
<div class="c v2" style="left:1802.25px;top:803.25px"></div>
<div class="c" style="left:1856.25px;top:803.25px"></div>
<div class="c" style="left:1922.25px;top:803.25px"></div>
<div class="c" style="left:1976.25px;top:803.25px"></div>
<div class="c" style="left:2030.25px;top:803.25px"></div>
<div class="c" style="left:2084.25px;top:803.25px"></div>
<div class="c" style="left:2150.25px;top:803.25px"></div>
<div class="c v2" style="left:2204.25px;top:803.25px"></div>
<div class="c" style="left:2258.25px;top:803.25px"></div>
<div class="c" style="left:2312.25px;top:803.25px"></div>
</div>
<div class="row">
<span class="t sans " style="left:224.52px;top:874.42px;font-weight:400;font-size:28.60px;line-height:28.60px;color:#a6a6a6;letter-spacing:1.63px;transform:scale(1.0500,1.0000);-webkit-text-stroke:1.0px #a6a6a6;">Lo Tom</span>
<span class="t sans " style="left:452.61px;top:875.60px;font-weight:700;font-size:26.00px;line-height:26.00px;color:#6e6e6e;transform:scale(1.1319,1.0000);">M</span>
<span class="t sans " style="left:519.62px;top:875.60px;font-weight:700;font-size:26.00px;line-height:26.00px;color:#6e6e6e;transform:scale(1.0042,1.0000);">S</span>
<div class="c" style="left:554.25px;top:863.25px"></div>
<div class="c v1" style="left:608.25px;top:863.25px"></div>
<div class="c v3" style="left:662.25px;top:863.25px"></div>
<div class="c" style="left:716.25px;top:863.25px"></div>
<div class="c" style="left:782.25px;top:863.25px"></div>
<div class="c" style="left:836.25px;top:863.25px"></div>
<div class="c" style="left:890.25px;top:863.25px"></div>
<div class="c" style="left:944.25px;top:863.25px"></div>
<div class="c" style="left:1010.25px;top:863.25px"></div>
<div class="c v2" style="left:1064.25px;top:863.25px"></div>
<div class="c v3" style="left:1118.25px;top:863.25px"></div>
<div class="c" style="left:1172.25px;top:863.25px"></div>
<div class="c" style="left:1238.25px;top:863.25px"></div>
<div class="c" style="left:1292.25px;top:863.25px"></div>
<div class="c" style="left:1346.25px;top:863.25px"></div>
<div class="c" style="left:1400.25px;top:863.25px"></div>
<div class="c" style="left:1466.25px;top:863.25px"></div>
<div class="c v2" style="left:1520.25px;top:863.25px"></div>
<div class="c v3" style="left:1574.25px;top:863.25px"></div>
<div class="c" style="left:1628.25px;top:863.25px"></div>
<div class="c" style="left:1694.25px;top:863.25px"></div>
<div class="c" style="left:1748.25px;top:863.25px"></div>
<div class="c" style="left:1802.25px;top:863.25px"></div>
<div class="c" style="left:1856.25px;top:863.25px"></div>
<div class="c" style="left:1922.25px;top:863.25px"></div>
<div class="c v2" style="left:1976.25px;top:863.25px"></div>
<div class="c v2" style="left:2030.25px;top:863.25px"></div>
<div class="c" style="left:2084.25px;top:863.25px"></div>
<div class="c" style="left:2150.25px;top:863.25px"></div>
<div class="c" style="left:2204.25px;top:863.25px"></div>
<div class="c" style="left:2258.25px;top:863.25px"></div>
<div class="c" style="left:2312.25px;top:863.25px"></div>
</div>
<div class="row">
<span class="t sans " style="left:224.52px;top:934.42px;font-weight:400;font-size:28.60px;line-height:28.60px;color:#a6a6a6;letter-spacing:1.38px;transform:scale(1.0500,1.0000);-webkit-text-stroke:1.0px #a6a6a6;">Hi Floor</span>
<span class="t sans " style="left:452.61px;top:935.60px;font-weight:700;font-size:26.00px;line-height:26.00px;color:#6e6e6e;transform:scale(1.1319,1.0000);">M</span>
<span class="t sans " style="left:519.62px;top:935.60px;font-weight:700;font-size:26.00px;line-height:26.00px;color:#6e6e6e;transform:scale(1.0042,1.0000);">S</span>
<div class="c" style="left:554.25px;top:923.25px"></div>
<div class="c" style="left:608.25px;top:923.25px"></div>
<div class="c" style="left:662.25px;top:923.25px"></div>
<div class="c" style="left:716.25px;top:923.25px"></div>
<div class="c" style="left:782.25px;top:923.25px"></div>
<div class="c" style="left:836.25px;top:923.25px"></div>
<div class="c" style="left:890.25px;top:923.25px"></div>
<div class="c" style="left:944.25px;top:923.25px"></div>
<div class="c" style="left:1010.25px;top:923.25px"></div>
<div class="c" style="left:1064.25px;top:923.25px"></div>
<div class="c" style="left:1118.25px;top:923.25px"></div>
<div class="c" style="left:1172.25px;top:923.25px"></div>
<div class="c" style="left:1238.25px;top:923.25px"></div>
<div class="c" style="left:1292.25px;top:923.25px"></div>
<div class="c" style="left:1346.25px;top:923.25px"></div>
<div class="c" style="left:1400.25px;top:923.25px"></div>
<div class="c" style="left:1466.25px;top:923.25px"></div>
<div class="c" style="left:1520.25px;top:923.25px"></div>
<div class="c" style="left:1574.25px;top:923.25px"></div>
<div class="c" style="left:1628.25px;top:923.25px"></div>
<div class="c" style="left:1694.25px;top:923.25px"></div>
<div class="c" style="left:1748.25px;top:923.25px"></div>
<div class="c" style="left:1802.25px;top:923.25px"></div>
<div class="c" style="left:1856.25px;top:923.25px"></div>
<div class="c" style="left:1922.25px;top:923.25px"></div>
<div class="c" style="left:1976.25px;top:923.25px"></div>
<div class="c" style="left:2030.25px;top:923.25px"></div>
<div class="c" style="left:2084.25px;top:923.25px"></div>
<div class="c" style="left:2150.25px;top:923.25px"></div>
<div class="c" style="left:2204.25px;top:923.25px"></div>
<div class="c" style="left:2258.25px;top:923.25px"></div>
<div class="c" style="left:2312.25px;top:923.25px"></div>
</div>
<div class="row">
<span class="t sans " style="left:225.50px;top:994.42px;font-weight:400;font-size:28.60px;line-height:28.60px;color:#a6a6a6;letter-spacing:1.42px;transform:scale(1.0500,1.0000);-webkit-text-stroke:1.0px #a6a6a6;">Crash</span>
<span class="t sans " style="left:452.61px;top:995.60px;font-weight:700;font-size:26.00px;line-height:26.00px;color:#6e6e6e;transform:scale(1.1319,1.0000);">M</span>
<span class="t sans " style="left:519.62px;top:995.60px;font-weight:700;font-size:26.00px;line-height:26.00px;color:#6e6e6e;transform:scale(1.0042,1.0000);">S</span>
<div class="c" style="left:554.25px;top:983.25px"></div>
<div class="c" style="left:608.25px;top:983.25px"></div>
<div class="c" style="left:662.25px;top:983.25px"></div>
<div class="c" style="left:716.25px;top:983.25px"></div>
<div class="c" style="left:782.25px;top:983.25px"></div>
<div class="c" style="left:836.25px;top:983.25px"></div>
<div class="c" style="left:890.25px;top:983.25px"></div>
<div class="c" style="left:944.25px;top:983.25px"></div>
<div class="c" style="left:1010.25px;top:983.25px"></div>
<div class="c" style="left:1064.25px;top:983.25px"></div>
<div class="c" style="left:1118.25px;top:983.25px"></div>
<div class="c" style="left:1172.25px;top:983.25px"></div>
<div class="c" style="left:1238.25px;top:983.25px"></div>
<div class="c" style="left:1292.25px;top:983.25px"></div>
<div class="c" style="left:1346.25px;top:983.25px"></div>
<div class="c" style="left:1400.25px;top:983.25px"></div>
<div class="c" style="left:1466.25px;top:983.25px"></div>
<div class="c" style="left:1520.25px;top:983.25px"></div>
<div class="c" style="left:1574.25px;top:983.25px"></div>
<div class="c" style="left:1628.25px;top:983.25px"></div>
<div class="c" style="left:1694.25px;top:983.25px"></div>
<div class="c" style="left:1748.25px;top:983.25px"></div>
<div class="c" style="left:1802.25px;top:983.25px"></div>
<div class="c" style="left:1856.25px;top:983.25px"></div>
<div class="c" style="left:1922.25px;top:983.25px"></div>
<div class="c" style="left:1976.25px;top:983.25px"></div>
<div class="c" style="left:2030.25px;top:983.25px"></div>
<div class="c" style="left:2084.25px;top:983.25px"></div>
<div class="c" style="left:2150.25px;top:983.25px"></div>
<div class="c" style="left:2204.25px;top:983.25px"></div>
<div class="c" style="left:2258.25px;top:983.25px"></div>
<div class="c" style="left:2312.25px;top:983.25px"></div>
</div>
<div class="row">
<span class="t sans " style="left:224.52px;top:1054.42px;font-weight:400;font-size:28.60px;line-height:28.60px;color:#a6a6a6;letter-spacing:1.12px;transform:scale(1.0500,1.0000);-webkit-text-stroke:1.0px #a6a6a6;">Ride</span>
<span class="t sans " style="left:452.61px;top:1055.60px;font-weight:700;font-size:26.00px;line-height:26.00px;color:#6e6e6e;transform:scale(1.1319,1.0000);">M</span>
<span class="t sans " style="left:519.62px;top:1055.60px;font-weight:700;font-size:26.00px;line-height:26.00px;color:#6e6e6e;transform:scale(1.0042,1.0000);">S</span>
<div class="c" style="left:554.25px;top:1043.25px"></div>
<div class="c v1" style="left:608.25px;top:1043.25px"></div>
<div class="c" style="left:662.25px;top:1043.25px"></div>
<div class="c v1" style="left:716.25px;top:1043.25px"></div>
<div class="c" style="left:782.25px;top:1043.25px"></div>
<div class="c v1" style="left:836.25px;top:1043.25px"></div>
<div class="c v2" style="left:890.25px;top:1043.25px"></div>
<div class="c v1" style="left:944.25px;top:1043.25px"></div>
<div class="c" style="left:1010.25px;top:1043.25px"></div>
<div class="c v1" style="left:1064.25px;top:1043.25px"></div>
<div class="c" style="left:1118.25px;top:1043.25px"></div>
<div class="c v2" style="left:1172.25px;top:1043.25px"></div>
<div class="c" style="left:1238.25px;top:1043.25px"></div>
<div class="c v1" style="left:1292.25px;top:1043.25px"></div>
<div class="c v2" style="left:1346.25px;top:1043.25px"></div>
<div class="c v1" style="left:1400.25px;top:1043.25px"></div>
<div class="c" style="left:1466.25px;top:1043.25px"></div>
<div class="c v2" style="left:1520.25px;top:1043.25px"></div>
<div class="c" style="left:1574.25px;top:1043.25px"></div>
<div class="c v2" style="left:1628.25px;top:1043.25px"></div>
<div class="c" style="left:1694.25px;top:1043.25px"></div>
<div class="c v1" style="left:1748.25px;top:1043.25px"></div>
<div class="c v2" style="left:1802.25px;top:1043.25px"></div>
<div class="c v1" style="left:1856.25px;top:1043.25px"></div>
<div class="c" style="left:1922.25px;top:1043.25px"></div>
<div class="c v2" style="left:1976.25px;top:1043.25px"></div>
<div class="c" style="left:2030.25px;top:1043.25px"></div>
<div class="c v2" style="left:2084.25px;top:1043.25px"></div>
<div class="c" style="left:2150.25px;top:1043.25px"></div>
<div class="c v1" style="left:2204.25px;top:1043.25px"></div>
<div class="c v2" style="left:2258.25px;top:1043.25px"></div>
<div class="c v2" style="left:2312.25px;top:1043.25px"></div>
</div>
<div class="row">
<span class="t sans " style="left:225.57px;top:1114.42px;font-weight:400;font-size:28.60px;line-height:28.60px;color:#a6a6a6;letter-spacing:1.35px;transform:scale(1.0500,1.0000);-webkit-text-stroke:1.0px #a6a6a6;">Op. HiHat</span>
<span class="t sans " style="left:452.61px;top:1115.60px;font-weight:700;font-size:26.00px;line-height:26.00px;color:#6e6e6e;transform:scale(1.1319,1.0000);">M</span>
<span class="t sans " style="left:519.62px;top:1115.60px;font-weight:700;font-size:26.00px;line-height:26.00px;color:#6e6e6e;transform:scale(1.0042,1.0000);">S</span>
<div class="c" style="left:554.25px;top:1103.25px"></div>
<div class="c" style="left:608.25px;top:1103.25px"></div>
<div class="c" style="left:662.25px;top:1103.25px"></div>
<div class="c" style="left:716.25px;top:1103.25px"></div>
<div class="c" style="left:782.25px;top:1103.25px"></div>
<div class="c" style="left:836.25px;top:1103.25px"></div>
<div class="c" style="left:890.25px;top:1103.25px"></div>
<div class="c" style="left:944.25px;top:1103.25px"></div>
<div class="c" style="left:1010.25px;top:1103.25px"></div>
<div class="c" style="left:1064.25px;top:1103.25px"></div>
<div class="c" style="left:1118.25px;top:1103.25px"></div>
<div class="c" style="left:1172.25px;top:1103.25px"></div>
<div class="c" style="left:1238.25px;top:1103.25px"></div>
<div class="c" style="left:1292.25px;top:1103.25px"></div>
<div class="c" style="left:1346.25px;top:1103.25px"></div>
<div class="c" style="left:1400.25px;top:1103.25px"></div>
<div class="c" style="left:1466.25px;top:1103.25px"></div>
<div class="c" style="left:1520.25px;top:1103.25px"></div>
<div class="c" style="left:1574.25px;top:1103.25px"></div>
<div class="c" style="left:1628.25px;top:1103.25px"></div>
<div class="c" style="left:1694.25px;top:1103.25px"></div>
<div class="c" style="left:1748.25px;top:1103.25px"></div>
<div class="c" style="left:1802.25px;top:1103.25px"></div>
<div class="c" style="left:1856.25px;top:1103.25px"></div>
<div class="c" style="left:1922.25px;top:1103.25px"></div>
<div class="c" style="left:1976.25px;top:1103.25px"></div>
<div class="c" style="left:2030.25px;top:1103.25px"></div>
<div class="c" style="left:2084.25px;top:1103.25px"></div>
<div class="c" style="left:2150.25px;top:1103.25px"></div>
<div class="c" style="left:2204.25px;top:1103.25px"></div>
<div class="c" style="left:2258.25px;top:1103.25px"></div>
<div class="c" style="left:2312.25px;top:1103.25px"></div>
</div>
<div class="row">
<span class="t sans " style="left:225.50px;top:1174.42px;font-weight:400;font-size:28.60px;line-height:28.60px;color:#a6a6a6;letter-spacing:1.37px;transform:scale(1.0500,1.0000);-webkit-text-stroke:1.0px #a6a6a6;">Cl. HiHat</span>
<span class="t sans " style="left:452.61px;top:1175.60px;font-weight:700;font-size:26.00px;line-height:26.00px;color:#6e6e6e;transform:scale(1.1319,1.0000);">M</span>
<span class="t sans " style="left:519.62px;top:1175.60px;font-weight:700;font-size:26.00px;line-height:26.00px;color:#6e6e6e;transform:scale(1.0042,1.0000);">S</span>
<div class="c v2" style="left:554.25px;top:1163.25px"></div>
<div class="c v2" style="left:608.25px;top:1163.25px"></div>
<div class="c v1" style="left:662.25px;top:1163.25px"></div>
<div class="c v2" style="left:716.25px;top:1163.25px"></div>
<div class="c v3" style="left:782.25px;top:1163.25px"></div>
<div class="c v2" style="left:836.25px;top:1163.25px"></div>
<div class="c v2" style="left:890.25px;top:1163.25px"></div>
<div class="c v3" style="left:944.25px;top:1163.25px"></div>
<div class="c v2" style="left:1010.25px;top:1163.25px"></div>
<div class="c v2" style="left:1064.25px;top:1163.25px"></div>
<div class="c v3" style="left:1118.25px;top:1163.25px"></div>
<div class="c v1" style="left:1172.25px;top:1163.25px"></div>
<div class="c v2" style="left:1238.25px;top:1163.25px"></div>
<div class="c v2" style="left:1292.25px;top:1163.25px"></div>
<div class="c v2" style="left:1346.25px;top:1163.25px"></div>
<div class="c v3" style="left:1400.25px;top:1163.25px"></div>
<div class="c v2" style="left:1466.25px;top:1163.25px"></div>
<div class="c v2" style="left:1520.25px;top:1163.25px"></div>
<div class="c v2" style="left:1574.25px;top:1163.25px"></div>
<div class="c v3" style="left:1628.25px;top:1163.25px"></div>
<div class="c v3" style="left:1694.25px;top:1163.25px"></div>
<div class="c v2" style="left:1748.25px;top:1163.25px"></div>
<div class="c v2" style="left:1802.25px;top:1163.25px"></div>
<div class="c v3" style="left:1856.25px;top:1163.25px"></div>
<div class="c v2" style="left:1922.25px;top:1163.25px"></div>
<div class="c v1" style="left:1976.25px;top:1163.25px"></div>
<div class="c v2" style="left:2030.25px;top:1163.25px"></div>
<div class="c v3" style="left:2084.25px;top:1163.25px"></div>
<div class="c v3" style="left:2150.25px;top:1163.25px"></div>
<div class="c v3" style="left:2204.25px;top:1163.25px"></div>
<div class="c v3" style="left:2258.25px;top:1163.25px"></div>
<div class="c v3" style="left:2312.25px;top:1163.25px"></div>
</div>
</main>
<div class="b" style="left:1038px;top:1251px;width:720px;height:15px;border-radius:7.5px;background:#464649"></div>
</body></html>
